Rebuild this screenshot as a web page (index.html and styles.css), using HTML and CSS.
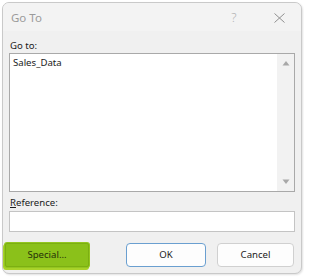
FILE: index.html
```html
<!DOCTYPE html>
<html>
<head>
<meta charset="utf-8">
<link rel="stylesheet" href="styles.css">
</head>
<body>
<div class="window">
  <div class="titlebar">
    <span class="title">Go To</span>
    <span class="help">?</span>
    <span class="close">
      <svg width="11" height="10" viewBox="0 0 11 10"><path d="M0.5 0.5 L10.5 9.5 M10.5 0.5 L0.5 9.5" stroke="#8f8f8f" stroke-width="1" fill="none"/></svg>
    </span>
  </div>
  <div class="content">
    <div class="label first">Go to:</div>
    <div class="listbox">
      <div class="items"><div class="item">Sales_Data</div></div>
      <div class="scrollbar">
        <svg width="8" height="6" viewBox="0 0 8 6"><path d="M0.5 5.5 L4 1 L7.5 5.5 Z" fill="#a8a8a8"/></svg>
        <svg width="8" height="6" viewBox="0 0 8 6"><path d="M0.5 0.5 L4 5 L7.5 0.5 Z" fill="#a8a8a8"/></svg>
      </div>
    </div>
    <div class="label second"><u>R</u>eference:</div>
    <div class="input"></div>
    <div class="buttons">
      <div class="btn special">Special...</div>
      <div class="spacer"></div>
      <div class="btn ok">OK</div>
      <div class="btn cancel">Cancel</div>
    </div>
  </div>
</div>
</body>
</html>
```
FILE: styles.css
```css
html, body {
  margin: 0;
  padding: 0;
  background: #ffffff;
}
body {
  font-family: "Noto Sans", "Open Sans", sans-serif;
  font-size: 9.6px;
  color: #1b1b1b;
  width: 304px;
  height: 278px;
  overflow: hidden;
}
.window {
  box-sizing: border-box;
  margin: 2px 0 0 2px;
  width: 300px;
  height: 272px;
  border: 1px solid #c9c9c9;
  border-radius: 7px;
  background: #f0f0f0;
  box-shadow: 1px 1px 2px rgba(0,0,0,0.12);
  overflow: hidden;
}
.titlebar {
  height: 28px;
  background: #f3f3f3;
  display: flex;
  align-items: center;
  padding-left: 8px;
  padding-top: 1px;
  box-sizing: border-box;
}
.title {
  font-size: 11.5px;
  color: #9b9b9b;
  flex: 1;
}
.help {
  font-size: 12.5px;
  color: #b0b0b0;
  font-weight: 300;
  width: 12px;
  margin-right: 34px;
  text-align: center;
}
.close {
  width: 11px;
  height: 10px;
  margin-right: 16px;
  display: flex;
}
.content {
  padding: 0 6px;
}
.label {
  height: 15px;
  line-height: 15px;
  padding-left: 1px;
}
.label.first {
  margin-top: 7px;
}
.label.second {
  margin-top: 3px;
}
.listbox {
  box-sizing: border-box;
  height: 139px;
  border: 1px solid #a9a9a9;
  background: #ffffff;
  display: flex;
}
.items {
  flex: 1;
  padding: 2px 3px;
}
.item {
  line-height: 14px;
}
.scrollbar {
  width: 17px;
  background: #f2f2f2;
  display: flex;
  flex-direction: column;
  justify-content: space-between;
  align-items: center;
  padding: 6px 0 6px 0;
}
.input {
  box-sizing: border-box;
  margin-top: 1px;
  height: 21px;
  border: 1px solid #c4c4c4;
  background: #ffffff;
}
.buttons {
  display: flex;
  margin-top: 11px;
  margin-left: -4px;
  margin-right: 1px;
}
.btn {
  box-sizing: border-box;
  height: 24px;
  line-height: 22px;
  text-align: center;
  border-radius: 4px;
  border: 1px solid #d0d0d0;
  background: #fdfdfd;
}
.special {
  width: 84px;
  background: #8bc11a;
  border: 1px solid #7caf12;
  border-radius: 2px;
  box-shadow: 0 0 0 1px #93c620, -1px 2px 0 1px #a9d22a;
  color: #263008;
}
.spacer {
  flex: 1;
}
.ok {
  width: 80px;
  border: 1px solid #6a9fd0;
  margin-right: 11px;
}
.cancel {
  width: 77px;
}
```
